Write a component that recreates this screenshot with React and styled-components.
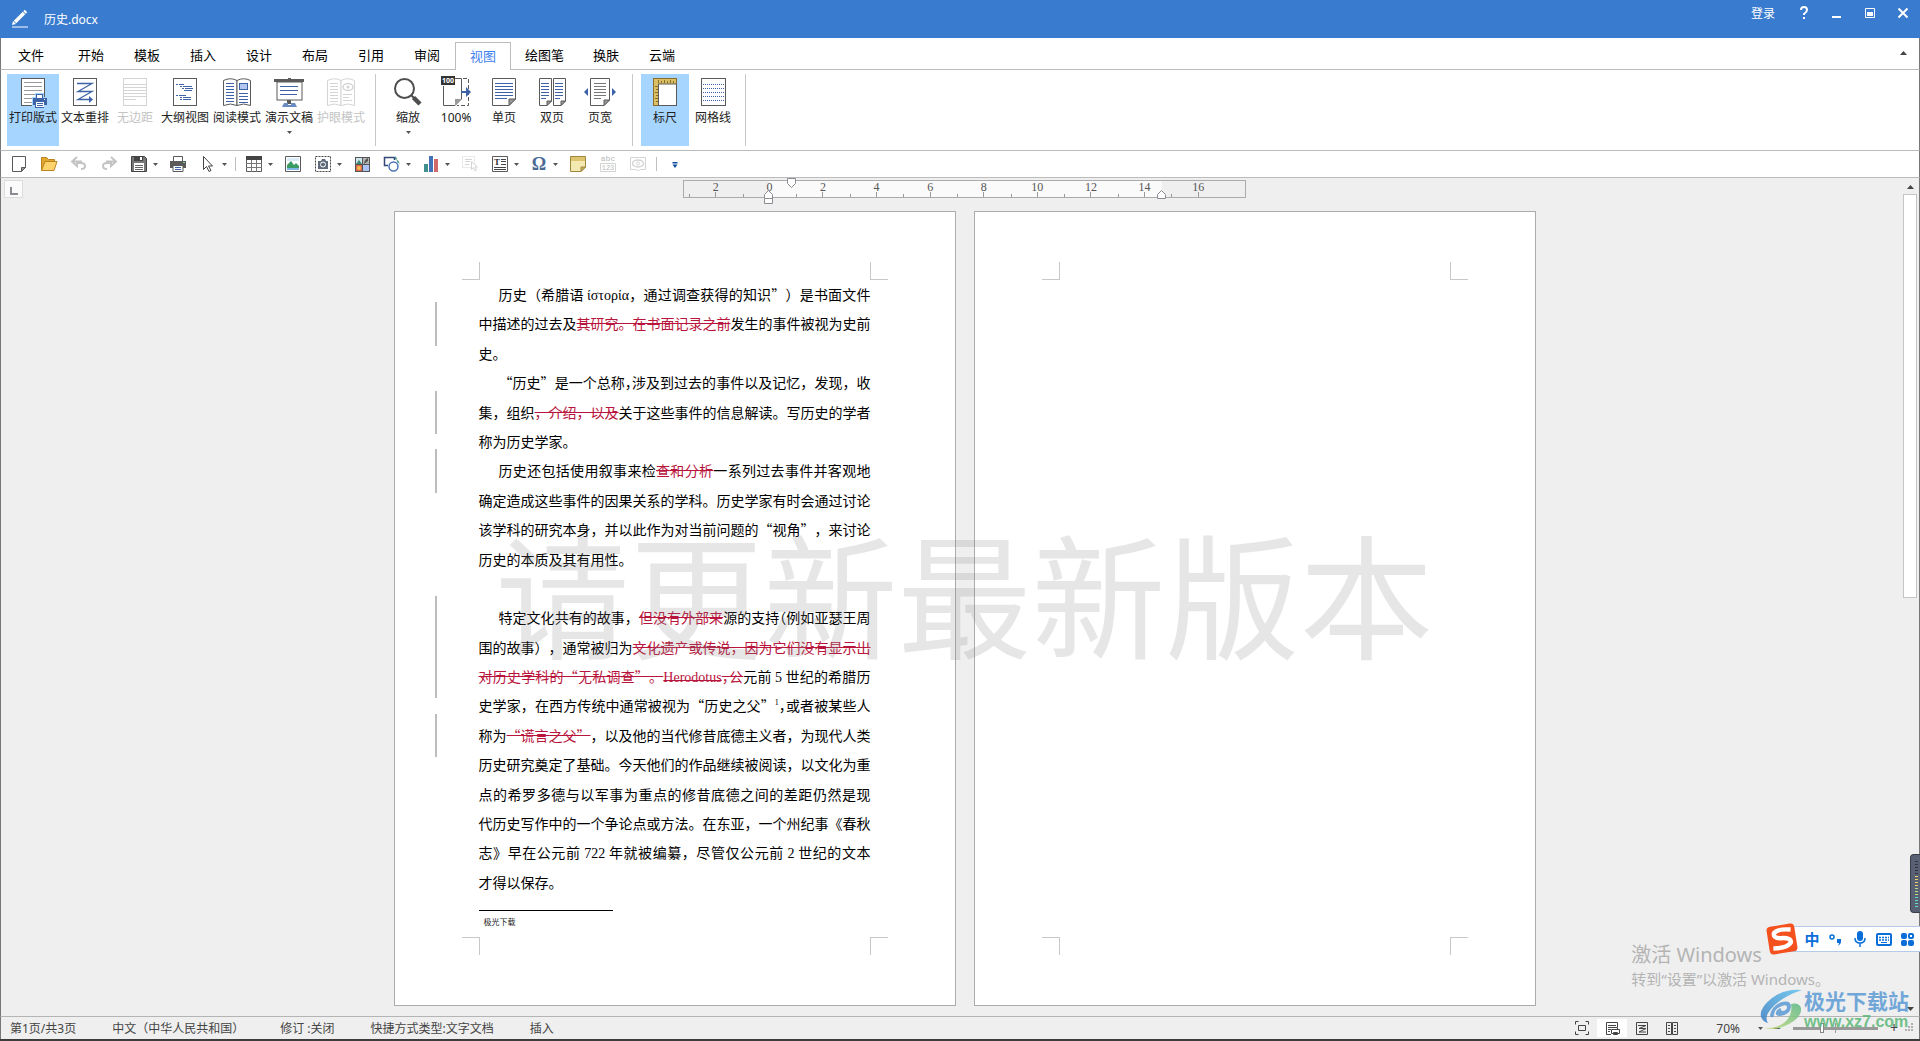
import React from 'react';
import styled, { createGlobalStyle, css } from 'styled-components';

const INK = '#5a5a5a';
const BLUE = '#3d62a8';
const PALE = '#d4d4d4';

const TABS = ['开始', '模板', '插入', '设计', '布局', '引用', '审阅', '视图', '绘图笔', '换肤', '云端'];

const RULER_MARKS = [2, 0, 2, 4, 6, 8, 10, 12, 14, 16];

/* ---------- ribbon icons ---------- */

function RibbonIcon({ children }) {
  return (
    <svg width="32" height="30" viewBox="0 0 32 30" fill="none" aria-hidden="true">
      {children}
    </svg>
  );
}

function Rows({ x, y, widths, step = 3, color = BLUE }) {
  return widths.map((w, i) => (
    <rect key={i} x={x} y={y + i * step} width={w} height="1" fill={color} />
  ));
}

function FoldedPage({ x, w, fold = 7 }) {
  const r = x + w;
  return (
    <>
      <path
        d={`M${x + 0.5} .5H${r - 0.5}V${28 - fold}L${r - fold} 27.5H${x + 0.5}Z`}
        fill="#fff"
        stroke={INK}
      />
      <path d={`M${r - fold} 27.5V${28 - fold}H${r - 0.5}Z`} fill="#999" stroke={INK} />
    </>
  );
}

const PrintLayoutIcon = () => (
  <RibbonIcon>
    <rect x="4.5" y=".5" width="23" height="27" fill="#fff" stroke={INK} />
    <Rows x={7} y={4} step={4} widths={[18, 18, 18, 16, 8, 8]} color="#9a9a9a" />
    <path d="M15 19h3v-4h9v4h4v10h-4v1h-9v-1h-3z" fill="#a6d6ff" />
    <path d="M19 16h7v4h4v7h-3v3h-9v-3h-2v-7h3z" fill={BLUE} />
    <path d="M20 17h5v3h-5zM19 24h8v5h-8z" fill="#fff" />
    <path d="M20 25.5h6M20 27.5h6" stroke={BLUE} />
    <rect x="27" y="21" width="1" height="1" fill="#fff" />
  </RibbonIcon>
);

const ReflowIcon = () => (
  <RibbonIcon>
    <rect x="4.5" y=".5" width="23" height="27" fill="#fff" stroke={INK} />
    <path d="M8 5.5h15L9 13.5h14L9 21.5h11" stroke={BLUE} strokeWidth="1.3" />
    <path d="M20 18l4 3.5-4 3.5z" fill={BLUE} />
  </RibbonIcon>
);

const NoMarginIcon = () => (
  <RibbonIcon>
    <rect x="4.5" y=".5" width="23" height="27" fill="#fff" stroke={PALE} />
    <Rows x={5} y={6} step={3} widths={[22, 22, 22, 22, 22, 12]} color={PALE} />
  </RibbonIcon>
);

const OutlineIcon = () => (
  <RibbonIcon>
    <rect x="4.5" y=".5" width="23" height="27" fill="#fff" stroke={INK} />
    <g stroke={BLUE}>
      <path d="M7 6.5h2M10 6.5h5M11 8.5h2M14 8.5h9M13 10.5h2M16 10.5h8M15 12.5h8" />
      <path d="M7 17.5h2M10 17.5h7M11 19.5h2M14 19.5h8M11 21.5h2M14 21.5h8" />
    </g>
  </RibbonIcon>
);

const BookShape = ({ color }) => (
  <>
    <path d="M2.500 2.500q7-3.500 13.500 0v25q-6.500-3-13.500 0z" fill="#fff" stroke={color} />
    <path d="M16 2.500q6.500-3.500 13.500 0v25q-7-3-13.500 0z" fill="#fff" stroke={color} />
  </>
);

const ReadingIcon = () => (
  <RibbonIcon>
    <BookShape color={INK} />
    <Rows x={5} y={5} step={3} widths={[8, 8, 8, 8, 8, 8, 8]} />
    <rect x="18.5" y="5.500" width="8" height="6" fill="#b4c7f0" stroke={BLUE} />
    <Rows x={18} y={15} step={3} widths={[9, 9, 9, 9]} />
  </RibbonIcon>
);

const SlidesIcon = () => (
  <RibbonIcon>
    <rect x="15" y="0" width="3" height="2" fill={INK} />
    <rect x="1" y="1" width="30" height="3" fill={INK} />
    <rect x="4" y="4" width="25" height="18" fill="#fff" stroke={INK} />
    <Rows x={7} y={8} step={4} widths={[18, 18, 17]} />
    <rect x="14" y="22" width="4" height="4" fill={INK} />
    <path d="M11 25h4v2h3v-2h4l2 4H9z" fill="#6b8cc0" />
  </RibbonIcon>
);

const EyeCareIcon = () => (
  <RibbonIcon>
    <BookShape color={PALE} />
    <Rows x={5} y={5} step={3} widths={[8, 8, 8, 8, 8, 8, 8]} color={PALE} />
    <ellipse cx="23" cy="9" rx="5" ry="3.500" stroke={PALE} strokeWidth="1.500" />
    <circle cx="23" cy="9" r="1.500" fill={PALE} />
    <Rows x={18} y={16} step={3} widths={[9, 6, 9]} color={PALE} />
  </RibbonIcon>
);

const ZoomIcon = () => (
  <RibbonIcon>
    <circle cx="12.500" cy="10.500" r="9.500" fill="#fff" stroke="#4e4e4e" strokeWidth="2" />
    <path d="M19 17l3 3" stroke="#4e4e4e" strokeWidth="2" />
    <path d="M21.500 19.500l6.500 6.500" stroke="#4e4e4e" strokeWidth="4.500" />
  </RibbonIcon>
);

const FullSizeIcon = () => (
  <RibbonIcon>
    <path d="M15 .5h6.500V21L15 27.500H3.500V8" fill="#fff" stroke={INK} />
    <path d="M15 27.500V21h6z" fill="#999" />
    <path d="M23 .5h5.500V27.500H17" stroke={INK} strokeDasharray="4 2" />
    <rect x="1" y="-2" width="14" height="9" fill="#333" />
    <text x="8" y="5" fontSize="7" fontWeight="700" textAnchor="middle" fill="#fff">100</text>
    <path d="M21 13h5V9l5 5-5 5v-4h-5z" fill={BLUE} />
  </RibbonIcon>
);

const OnePageIcon = () => (
  <RibbonIcon>
    <FoldedPage x={4} w={24} />
    <Rows x={7} y={5} step={3} widths={[18, 18, 18, 18, 18, 12]} />
  </RibbonIcon>
);

const TwoPagesIcon = () => (
  <RibbonIcon>
    <FoldedPage x={3} w={13} fold={5} />
    <FoldedPage x={17} w={13} fold={5} />
    <Rows x={5} y={5} step={3} widths={[8, 8, 8, 8, 8, 5]} />
    <Rows x={19} y={5} step={3} widths={[8, 8, 8, 8, 8, 5]} />
  </RibbonIcon>
);

const PageWidthIcon = () => (
  <RibbonIcon>
    <FoldedPage x={6} w={20} fold={6} />
    <Rows x={10} y={5} step={3} widths={[12, 12, 12, 12, 12, 7]} color="#777" />
    <path d="M4 10v8l-4-4zM28 10v8l4-4z" fill={BLUE} />
  </RibbonIcon>
);

const RulerIcon = () => (
  <RibbonIcon>
    <rect x="4.500" y=".5" width="23" height="27" fill="#d9bf62" stroke="#8a6d2a" />
    <rect x="9.500" y="6" width="18" height="21.500" fill="#fff" stroke={INK} />
    <path
      d="M9.500 2v3M12.500 3v2M15.500 2v3M18.500 3v2M21.500 2v3M24.500 3v2M6 8.500h3M7 11.500h2M6 14.500h3M7 17.500h2M6 20.500h3M7 23.500h2"
      stroke="#8a6d2a"
    />
  </RibbonIcon>
);

const GridIcon = () => (
  <RibbonIcon>
    <rect x="4.500" y=".5" width="24" height="27" fill="#fff" stroke={INK} />
    <path
      d="M6 6.500h21M6 10.500h21M6 14.500h21M6 18.500h21M6 22.500h21"
      stroke={BLUE}
      strokeDasharray="1 1"
    />
  </RibbonIcon>
);

const RIBBON = [
  [
    { label: '打印版式', icon: <PrintLayoutIcon />, active: true },
    { label: '文本重排', icon: <ReflowIcon /> },
    { label: '无边距', icon: <NoMarginIcon />, disabled: true },
    { label: '大纲视图', icon: <OutlineIcon /> },
    { label: '阅读模式', icon: <ReadingIcon /> },
    { label: '演示文稿', icon: <SlidesIcon />, menu: true },
    { label: '护眼模式', icon: <EyeCareIcon />, disabled: true },
  ],
  [
    { label: '缩放', icon: <ZoomIcon />, menu: true },
    { label: '100%', icon: <FullSizeIcon /> },
    { label: '单页', icon: <OnePageIcon /> },
    { label: '双页', icon: <TwoPagesIcon /> },
    { label: '页宽', icon: <PageWidthIcon /> },
  ],
  [
    { label: '标尺', icon: <RulerIcon />, active: true },
    { label: '网格线', icon: <GridIcon /> },
  ],
];

/* ---------- quick access icons ---------- */

const QUICK = [
  {
    name: '新建',
    icon: (
      <>
        <path d="M1.500 .5h13v11l-4 4h-9z" fill="#fff" stroke={INK} />
        <path d="M10.500 15.500v-4h4z" fill="#999" stroke={INK} />
      </>
    ),
  },
  {
    name: '打开',
    icon: (
      <>
        <path d="M.5 14.500v-13h5l2 2h6v3" fill="#e0a72e" stroke="#b98420" />
        <path d="M.5 14.500l3.500-9h12l-3 9z" fill="#ffd36b" stroke="#b98420" />
      </>
    ),
  },
  {
    name: '撤销',
    icon: <path d="M6 1L1 5.500 6 10V7h4q4 0 4 3t-4 3M2 5.500h9" stroke="#c4c4c4" strokeWidth="2" />,
  },
  {
    name: '恢复',
    icon: <path d="M10 1l5 4.500L10 10V7H6q-4 0-4 3t4 3M14 5.500H5" stroke="#c4c4c4" strokeWidth="2" />,
  },
  {
    name: '保存',
    split: true,
    icon: (
      <>
        <path d="M.5 .5h13l2 2v13H.5z" fill="#777" stroke="#444" />
        <path d="M3 0h9v5H3z" fill="#444" />
        <path d="M9 1h2v3H9zM3 7h10v8H3z" fill="#fff" />
        <path d="M4 9.500h8M4 11.500h8M4 13.500h8" stroke="#666" />
      </>
    ),
  },
  {
    name: '打印',
    icon: (
      <>
        <path d="M0 5h16v7H0z" fill="#5b5b5b" />
        <path d="M3.500 5V.5h9V5" fill="#fff" stroke={INK} />
        <path d="M3 9.500h10v6H3z" fill="#fff" stroke={INK} />
        <path d="M5 11.500h6M5 13.500h6" stroke={BLUE} />
        <rect x="13" y="6" width="2" height="1" fill="#6fd08c" />
      </>
    ),
  },
  {
    name: '选择',
    split: true,
    icon: (
      <path d="M3.500 .5v13l3-3 2.500 5 2-1-2.500-4.500h4z" fill="#fff" stroke="#444" />
    ),
  },
  { divider: true },
  {
    name: '表格',
    split: true,
    icon: (
      <>
        <path d="M.5 .5h15v15H.5z" fill="#fff" stroke={INK} />
        <path d="M0 0h16v4H0z" fill="#444" />
        <path d="M0 7.500h16M0 11.500h16M5.500 4v12M10.500 4v12" stroke="#777" />
      </>
    ),
  },
  {
    name: '图片',
    icon: (
      <>
        <path d="M.5 .5h15v15H.5z" fill="#fff" stroke={INK} />
        <path d="M2 2h12v3H2z" fill="#d9ecf8" />
        <path d="M2 12V9l4-4 3 4 2-2 3 3v2z" fill="#3c9a63" />
        <path d="M2 12h12v2H2z" fill="#7fb8e6" />
      </>
    ),
  },
  {
    name: '截屏',
    split: true,
    icon: (
      <>
        <path d="M.5 .5h15v15H.5z" stroke="#444" strokeDasharray="2 1" />
        <path d="M3 5h3l1-2h3l1 2h2v8H3z" fill="#5f6b7a" />
        <circle cx="8" cy="8.500" r="2.500" stroke="#fff" />
      </>
    ),
  },
  {
    name: '图库',
    icon: (
      <>
        <path d="M1 1h15v15H1z" fill="#555" />
        <path d="M2 2h6v6H2z" fill="#cfe6ee" />
        <path d="M2 8l3-4 3 4z" fill="#3c8a73" />
        <path d="M9 2h6v6H9z" fill="#b5b5b5" />
        <path d="M10 8q0-4 4-6v3z" fill="#555" />
        <path d="M2 9h6v6H2z" fill="#e0684e" />
        <circle cx="5" cy="12" r="2" fill="#f7c04a" />
        <path d="M9 9h6v6H9z" fill="#a9c4f5" />
      </>
    ),
  },
  {
    name: '形状',
    split: true,
    icon: (
      <>
        <path d="M4 9.500H.5v-8h10V4" stroke="#33477a" strokeWidth="1.500" />
        <path d="M11 1l4.500 7" stroke="#4c9488" strokeWidth="1.500" strokeDasharray="3 1" />
        <circle cx="9.500" cy="10.500" r="4.500" fill="#fff" stroke="#4c76b8" strokeWidth="1.500" />
      </>
    ),
  },
  {
    name: '图表',
    split: true,
    icon: (
      <>
        <path d="M1 8h4v8H1z" fill="#3f8f8f" />
        <path d="M6 0h4v16H6z" fill="#4472b8" />
        <path d="M11 3h4v13h-4z" fill="#d06a6a" />
      </>
    ),
  },
  {
    name: '选择对象',
    icon: (
      <>
        <path d="M.5 .5h12v11H.5z" stroke={PALE} strokeDasharray="1 1" />
        <path d="M3 3.500h7M3 5.500h5M3 8.500h4" stroke={PALE} />
        <path d="M9.500 5.500v8l2-2 1.500 3.500 1.500-1-1.500-3h2.500z" fill="#fff" stroke={PALE} />
      </>
    ),
  },
  {
    name: '文本框',
    split: true,
    icon: (
      <>
        <path d="M.5 .5h15v15H.5z" fill="#fff" stroke={INK} />
        <text x="2" y="9" fontSize="9" fontWeight="700" fontFamily="Liberation Serif, serif" fill="#333">T</text>
        <path d="M9 3.500h5M9 5.500h5M9 8.500h5M2 11.500h12M2 13.500h12" stroke="#444" />
      </>
    ),
  },
  {
    name: '符号',
    split: true,
    icon: (
      <text x="8" y="14" fontSize="18" fontWeight="700" fontFamily="Liberation Serif, serif" textAnchor="middle" fill="#4b6a96">Ω</text>
    ),
  },
  {
    name: '批注',
    icon: (
      <>
        <path d="M.5 .5h15V11L11 15.500H.5z" fill="#f4e9b0" stroke="#9c8640" />
        <path d="M1 1h14v4H1z" fill="#dfc46f" />
        <path d="M11 15.500V11h4.500z" fill="#cdb25e" stroke="#9c8640" />
      </>
    ),
  },
  {
    name: '字数统计',
    icon: (
      <>
        <text x="8" y="5" fontSize="8" fontFamily="Liberation Mono, monospace" textAnchor="middle" fill="#b8b8b8">abc</text>
        <path d="M.5 7.500h15v8H.5z" stroke={PALE} />
        <text x="8" y="14" fontSize="7" fontFamily="Liberation Mono, monospace" textAnchor="middle" fill="#b8b8b8">123</text>
      </>
    ),
  },
  {
    name: '护眼',
    icon: (
      <>
        <path d="M.5 1.500h15v12h-5l-2 1h-1l-2-1h-5z" stroke={PALE} />
        <ellipse cx="8" cy="7.500" rx="5.500" ry="3.500" stroke={PALE} strokeWidth="1.500" />
        <circle cx="8" cy="7.500" r="1.500" stroke={PALE} />
      </>
    ),
  },
  { divider: true },
  {
    name: '更多',
    icon: <path d="M5.500 6h5v1.500h-5zM5.500 8.500h5L8 12z" fill="#0b4a9e" />,
  },
];

const VIEWS = [
  {
    name: '全屏',
    icon: (
      <>
        <path d="M1.500 4.500v-3h3M11.500 1.500h3v3M14.500 11.500v3h-3M4.500 14.500h-3v-3" />
        <path d="M4.500 5.500h7v5h-7z" />
      </>
    ),
  },
  {
    name: '打印版式视图',
    active: true,
    icon: (
      <>
        <path d="M7 14.500H2.500v-12h11V7M4 5.500h8M4 7.500h6M4 9.500h3M4 11.500h2" />
        <path d="M7.500 9.500h8v4h-8zM9.500 7.500h4v2M9.500 12.500h4v2h-4z" />
      </>
    ),
  },
  {
    name: '重排视图',
    icon: (
      <>
        <path d="M2.500 2.500h11v12h-11z" />
        <path d="M4 5.500h8L5 8.500h7l-7 3.500h7" />
      </>
    ),
  },
  {
    name: '阅读视图',
    icon: (
      <path d="M2.500 2.500h5v12h-5zM8.500 2.500h5v12h-5zM4 5.500h2M4 8.500h2M4 11.500h2M10 5.500h2M10 8.500h2M10 11.500h2" />
    ),
  },
];

/* ---------- document ---------- */

function Document() {
  return (
    <>
      <Paragraph>
        <Line indent>历史（希腊语 <Latin>ίστορία</Latin>，通过调查获得的知识”）是书面文件</Line>
        <Line changed>中描述的过去及<Del>其研究。在书面记录之前</Del>发生的事件被视为史前</Line>
        <Line end>史。</Line>
      </Paragraph>
      <Paragraph>
        <Line indent>“历史”是一个总称<Half>，</Half>涉及到过去的事件以及记忆，发现，收</Line>
        <Line changed>集，组织<Del>，介绍，以及</Del>关于这些事件的信息解读。写历史的学者</Line>
        <Line end>称为历史学家。</Line>
      </Paragraph>
      <Paragraph>
        <Line indent changed>历史还包括使用叙事来检<Del>查和分析</Del>一系列过去事件并客观地</Line>
        <Line>确定造成这些事件的因果关系的学科。历史学家有时会通过讨论</Line>
        <Line>该学科的研究本身，并以此作为对当前问题的“视角”，来讨论</Line>
        <Line end>历史的本质及其有用性。</Line>
      </Paragraph>
      <Paragraph>
        <br />
      </Paragraph>
      <Paragraph>
        <Line indent changed>特定文化共有的故事，<Del>但没有外部来</Del>源的支持<Half>（</Half>例如亚瑟王周</Line>
        <Line changed>围的故事），通常被归为<Del>文化遗产或传说，因为它们没有显示出</Del></Line>
        <Line changed><Del>对历史学科的“无私调查”。<Latin>Herodotus</Latin><Half>，</Half>公</Del>元前 <Latin>5</Latin> 世纪的希腊历</Line>
        <Line>史学家，在西方传统中通常被视为“历史之父”<Note>1</Note><Half>，</Half>或者被某些人</Line>
        <Line changed>称为<Del>“谎言之父”</Del>，以及他的当代修昔底德主义者，为现代人类</Line>
        <Line>历史研究奠定了基础。今天他们的作品继续被阅读，以文化为重</Line>
        <Line>点的希罗多德与以军事为重点的修昔底德之间的差距仍然是现</Line>
        <Line>代历史写作中的一个争论点或方法。在东亚，一个州纪事《春秋</Line>
        <Line>志》早在公元前 <Latin>722</Latin> 年就被编纂，尽管仅公元前 <Latin>2</Latin> 世纪的文本</Line>
        <Line end>才得以保存。</Line>
      </Paragraph>
      <Footnote>极光下载</Footnote>
    </>
  );
}

function Sheet({ children }) {
  return (
    <StyledSheet>
      <CropMark edge="top" side="left" />
      <CropMark edge="top" side="right" />
      <CropMark edge="bottom" side="left" />
      <CropMark edge="bottom" side="right" />
      {children}
    </StyledSheet>
  );
}

function Ruler() {
  return (
    <StyledRuler>
      <RulerRange />
      {RULER_MARKS.map((n, i) => (
        <RulerCell key={i}>{n}</RulerCell>
      ))}
      <Marker at={19} top>
        <path d="M1.500 .5h8v5l-4 4-4-4z" />
      </Marker>
      <Marker at={15}>
        <path d="M1.500 8.500v-4l4-4 4 4v9h-8v-5h8" />
      </Marker>
      <Marker at={85}>
        <path d="M1.500 8.500v-4l4-4 4 4v4z" />
      </Marker>
    </StyledRuler>
  );
}

function Caret() {
  return (
    <svg width="5" height="3" viewBox="0 0 5 3" aria-hidden="true">
      <path d="M0 0h5L2.500 3z" fill="#555" />
    </svg>
  );
}

function ScrollArrow({ down }) {
  return (
    <svg width="7" height="4" viewBox="0 0 7 4" aria-hidden="true">
      <path d={down ? 'M0 0h7L3.500 4z' : 'M0 4h7L3.500 0z'} fill="#444" />
    </svg>
  );
}

function ImeBar() {
  return (
    <StyledIme>
      <svg width="32" height="32" viewBox="0 0 32 32" aria-hidden="true">
        <g transform="rotate(-9 16 16)">
          <rect x="2" y="2" width="28" height="28" rx="4" fill="#f4511e" />
          <path d="M26 8Q13 5 9 9q-2 5 6 6 11 1 9 6-4 5-18 3" stroke="#fff" strokeWidth="4.500" fill="none" />
        </g>
      </svg>
      <ImeButton aria-label="中文输入">中</ImeButton>
      <ImeButton aria-label="标点">
        <svg width="16" height="16" viewBox="0 0 16 16" aria-hidden="true">
          <circle cx="4" cy="6" r="2" fill="none" stroke="#0a6ed8" strokeWidth="1.500" />
          <path d="M9 8h4v3q0 2-3 4 1-2 1-3H9z" fill="#0a6ed8" />
        </svg>
      </ImeButton>
      <ImeButton aria-label="语音">
        <svg width="16" height="16" viewBox="0 0 16 16" fill="none" aria-hidden="true">
          <rect x="5" y="0" width="6" height="10" rx="3" fill="#0a6ed8" />
          <path d="M3 7q0 5 5 5t5-5M8 12v4" stroke="#0a6ed8" strokeWidth="1.500" />
        </svg>
      </ImeButton>
      <ImeButton aria-label="软键盘">
        <svg width="16" height="16" viewBox="0 0 16 16" fill="none" aria-hidden="true">
          <rect x="1" y="3" width="14" height="11" rx="1" stroke="#0a6ed8" strokeWidth="2" />
          <path d="M3 6.500h10M3 9h10" stroke="#0a6ed8" strokeWidth="1.500" strokeDasharray="2 1" />
          <path d="M5 11.500h6" stroke="#0a6ed8" />
        </svg>
      </ImeButton>
      <ImeButton aria-label="工具箱">
        <svg width="16" height="16" viewBox="0 0 16 16" fill="#0a6ed8" aria-hidden="true">
          <rect x="1" y="2" width="6" height="6" rx="2" />
          <rect x="1" y="9" width="6" height="6" rx="2" />
          <rect x="8" y="9" width="6" height="6" rx="2" />
          <rect x="9" y="3" width="4" height="4" rx="1" fill="none" stroke="#0a6ed8" strokeWidth="2" />
        </svg>
      </ImeButton>
    </StyledIme>
  );
}

function Gauge() {
  const bars = Array.from({ length: 16 }, (_, i) => i);
  const tint = i => (i < 5 ? '#30343f' : i < 9 ? '#e8cf6a' : i < 12 ? '#b4de86' : '#63dcc0');

  return (
    <StyledGauge>
      {bars.map(i => (
        <GaugeBar key={i} color={tint(i)} />
      ))}
    </StyledGauge>
  );
}

function SiteLogo() {
  return (
    <StyledSiteLogo>
      <svg width="42" height="42" viewBox="0 0 42 42" fill="none" aria-hidden="true">
        <defs>
          <linearGradient id="swirlBlue" x1="0" y1="1" x2="1" y2="0">
            <stop offset="0" stopColor="#3a7fc4" />
            <stop offset="1" stopColor="#63c3ee" />
          </linearGradient>
          <linearGradient id="swirlGreen" x1="0" y1="1" x2="1" y2="0">
            <stop offset="0" stopColor="#c9dc7c" />
            <stop offset="1" stopColor="#58b884" />
          </linearGradient>
        </defs>
        <path d="M42 1Q26 -1 12 9 -1 19 1 28q2 5 7 6-4-6 3-14Q21 8 42 1z" fill="url(#swirlBlue)" />
        <path d="M10 27q1-10 12-14 9-2 9 5-1 8-11 9-5 0-4-4 1-3 5-4-1 3 2 3 4-1 4-4 0-3-5-1-8 3-8 9-1 4-4 1z" fill="#5a9bd4" />
        <path d="M3 39q14 1 22-6 8-7 6-18 8-2 10 4 1 9-12 16-13 7-26 4z" fill="url(#swirlGreen)" />
      </svg>
      <div>
        <SiteName>极光下载站</SiteName>
        <SiteUrl>www.xz7.com</SiteUrl>
      </div>
    </StyledSiteLogo>
  );
}

export default function App() {
  return (
    <Window>
      <GlobalStyle />

      <TitleBar>
        <TitleName>
          <svg width="18" height="18" viewBox="0 0 18 18" fill="none" aria-hidden="true">
            <path d="M1 17h16" stroke="#fff" />
            <path d="M4 12L13 3M13.500 2.500l1.500-1.500" stroke="#fff" strokeWidth="3.500" />
            <path d="M1 15l1-4 3 3z" fill="#fff" />
          </svg>
          历史.docx
        </TitleName>
        <TitleActions>
          <TitleButton wide>登录</TitleButton>
          <TitleButton aria-label="帮助">
            <svg width="12" height="14" viewBox="0 0 12 14" fill="none" aria-hidden="true">
              <path d="M3 4q0-3 3-3t3 3q0 2-3 4v1M6 11v2" stroke="#fff" strokeWidth="2" />
            </svg>
          </TitleButton>
          <TitleButton aria-label="最小化">
            <svg width="10" height="10" viewBox="0 0 10 10" aria-hidden="true">
              <path d="M0 8h9v2H0z" fill="#fff" />
            </svg>
          </TitleButton>
          <TitleButton aria-label="还原">
            <svg width="10" height="10" viewBox="0 0 10 10" aria-hidden="true">
              <path d="M.5 .5h9v9h-9z" fill="none" stroke="#fff" />
              <path d="M2 4h6v4H2z" fill="#fff" />
            </svg>
          </TitleButton>
          <TitleButton aria-label="关闭">
            <svg width="10" height="10" viewBox="0 0 10 10" aria-hidden="true">
              <path d="M.5 .5l9 9M9.500 .5l-9 9" stroke="#fff" strokeWidth="2" />
            </svg>
          </TitleButton>
        </TitleActions>
      </TitleBar>

      <Tabs>
        <FileTab>文件</FileTab>
        {TABS.map(tab => (
          <Tab key={tab} active={tab === '视图'}>{tab}</Tab>
        ))}
        <CollapseButton aria-label="收起功能区"><ScrollArrow /></CollapseButton>
      </Tabs>

      <Ribbon>
        {RIBBON.map((group, i) => (
          <RibbonGroup key={i}>
            {group.map(({ label, icon, active, disabled, menu }) => (
              <RibbonButton key={label} active={active} disabled={disabled}>
                {icon}
                <span>{label}</span>
                {menu && <Caret />}
              </RibbonButton>
            ))}
          </RibbonGroup>
        ))}
      </Ribbon>

      <QuickBar>
        {QUICK.map(({ name, icon, split, divider }, i) => (
          divider ? <Divider key={i} /> : (
            <QuickButton key={i} aria-label={name}>
              <svg width="16" height="16" viewBox="0 0 16 16" fill="none" aria-hidden="true">{icon}</svg>
              {split && <Caret />}
            </QuickButton>
          )
        ))}
      </QuickBar>

      <Workspace>
        <CornerColumn>
          <TabStop aria-label="制表位" />
        </CornerColumn>
        <Canvas>
          <Ruler />
          <Sheets>
            <Sheet><Document /></Sheet>
            <Sheet />
            <Watermark>请更新最新版本</Watermark>
          </Sheets>
        </Canvas>
        <ScrollColumn>
          <ScrollButton aria-label="向上滚动"><ScrollArrow /></ScrollButton>
          <ScrollTrack><ScrollThumb /></ScrollTrack>
          <ScrollButton aria-label="向下滚动"><ScrollArrow down /></ScrollButton>
        </ScrollColumn>
      </Workspace>

      <StatusBar>
        <StatusText>第1页/共3页</StatusText>
        <StatusText>中文（中华人民共和国）</StatusText>
        <StatusText>修订 :关闭</StatusText>
        <StatusText>快捷方式类型:文字文档</StatusText>
        <StatusText>插入</StatusText>
        <StatusTools>
          {VIEWS.map(({ name, icon, active }) => (
            <ViewButton key={name} aria-label={name} active={active}>
              <svg width="16" height="16" viewBox="0 0 16 16" fill="none" stroke="#444" aria-hidden="true">{icon}</svg>
            </ViewButton>
          ))}
          <ZoomValue>70% <Caret /></ZoomValue>
          <StepButton aria-label="缩小">−</StepButton>
          <ZoomSlider type="range" min="10" max="190" defaultValue="70" aria-label="缩放比例" />
          <StepButton aria-label="放大">+</StepButton>
          <Grip viewBox="0 0 10 10" aria-hidden="true">
            <path d="M6 0h2v2H6zM3 3h2v2H3zM6 3h2v2H6zM0 6h2v2H0zM3 6h2v2H3zM6 6h2v2H6z" />
          </Grip>
        </StatusTools>
      </StatusBar>

      <Activation>
        <ActivationTitle>激活 Windows</ActivationTitle>
        <div>转到“设置”以激活 Windows。</div>
      </Activation>
      <ImeBar />
      <Gauge />
      <SiteLogo />
    </Window>
  );
}

/* ---------- styles ---------- */

const GlobalStyle = createGlobalStyle`
  * {
    box-sizing: border-box;
  }

  body {
    margin: 0;
    font-family: "Noto Sans", "Noto Sans CJK SC", sans-serif;
    font-size: 12px;
    color: #222;
  }

  button {
    display: flex;
    align-items: center;
    justify-content: center;
    padding: 0;
    border: 0;
    background: none;
    font: inherit;
    color: inherit;
    white-space: nowrap;
  }

  svg {
    flex: none;
    overflow: visible;
  }
`;

const Window = styled.div`
  position: relative;
  display: flex;
  flex-direction: column;
  min-height: 100vh;
  background: #efefef;
  border-bottom: 2px solid #3c3c3c;
  overflow: hidden;
`;

const sideEdges = css`
  border-left: 1px solid #777;
  border-right: 1px solid #777;
`;

const TitleBar = styled.header`
  display: flex;
  justify-content: space-between;
  height: 38px;
  background: #397bce;
  color: #fff;
`;

const TitleName = styled.div`
  display: flex;
  align-items: center;
  gap: 15px;
  padding-left: 11px;
`;

const TitleActions = styled.div`
  display: flex;
  height: 26px;
  padding-right: 1px;
`;

const TitleButton = styled.button.withConfig({ shouldForwardProp: p => p !== 'wide' })`
  width: ${p => (p.wide ? 48 : 33)}px;
`;

const Tabs = styled.nav`
  ${sideEdges}
  display: flex;
  align-items: flex-end;
  height: 32px;
  padding-right: 12px;
  background: #fff;
  border-bottom: 1px solid #bcbcbc;
  font-size: 13px;
  color: #000;
`;

const Tab = styled.button.withConfig({ shouldForwardProp: p => p !== 'active' })`
  min-width: 56px;
  height: 28px;
  padding: 0 14px 2px;

  ${p => p.active && css`
    margin-bottom: -1px;
    border: 1px solid #bcbcbc;
    border-bottom: 0;
    background: #fff;
    color: #3f7ff0;
  `}
`;

const FileTab = styled(Tab)`
  padding: 0 17px 2px;
  margin-right: 2px;
`;

const CollapseButton = styled.button`
  height: 32px;
  margin-left: auto;
`;

const Ribbon = styled.div`
  ${sideEdges}
  display: flex;
  padding: 4px 0;
  background: #fff;
  border-bottom: 1px solid #bcbcbc;
`;

const RibbonGroup = styled.div`
  display: flex;
  padding: 0 8px;
  border-right: 1px solid #c8c8c8;

  &:first-child {
    padding-left: 6px;
  }
`;

const RibbonButton = styled.button.withConfig({ shouldForwardProp: p => p !== 'active' })`
  flex-direction: column;
  justify-content: flex-start;
  min-width: 48px;
  height: 72px;
  padding: 4px 2px 0;
  line-height: 16px;
  background: ${p => (p.active ? '#a6d6ff' : 'none')};

  &:disabled {
    color: #c4c4c4;
  }

  span {
    margin: 2px 0 5px;
  }
`;

const QuickBar = styled.div`
  ${sideEdges}
  display: flex;
  align-items: center;
  height: 27px;
  padding-left: 3px;
  background: #fff;
  border-bottom: 1px solid #bcbcbc;
`;

const QuickButton = styled.button`
  gap: 6px;
  height: 24px;
  padding: 0 5px 0 7px;

  svg:only-child {
    margin-right: 2px;
  }
`;

const Divider = styled.div`
  width: 1px;
  height: 14px;
  margin: 0 3px;
  background: #c0c0c0;
`;

const Workspace = styled.main`
  ${sideEdges}
  display: flex;
  flex: 1;
  padding-top: 2px;
`;

const CornerColumn = styled.div`
  width: 28px;
  padding-left: 3px;
`;

const TabStop = styled.button`
  width: 19px;
  height: 18px;
  border: 1px solid #dcdcdc;
  background: #fbfbfb;

  &::after {
    content: '';
    width: 6px;
    height: 6px;
    margin-top: 3px;
    border: solid #8a8a90;
    border-width: 0 0 2px 2px;
  }
`;

const Canvas = styled.div`
  display: flex;
  flex: 1;
  flex-direction: column;
  align-items: center;
  gap: 13px;
  padding-bottom: 9px;
`;

const StyledRuler = styled.div`
  position: relative;
  display: flex;
  width: 563px;
  height: 18px;
  padding: 0 20px 0 5px;
  border: 1px solid #ababab;
`;

const RulerRange = styled.div`
  position: absolute;
  inset: 0 83px 0 85px;
  background: #fafafa;
`;

const RulerCell = styled.div`
  position: relative;
  flex: 1;
  font: 12px/13px "Liberation Serif", serif;
  text-align: center;
  color: #555;
  background:
    linear-gradient(#999, #999) 50% 100% / 1px 5px no-repeat,
    linear-gradient(#999, #999) 0 100% / 1px 3px no-repeat;
`;

const Marker = styled.svg.attrs({ width: 11, height: 14, viewBox: '0 0 11 14', 'aria-hidden': true }).withConfig({
  shouldForwardProp: p => p !== 'at' && p !== 'top',
})`
  position: absolute;
  left: ${p => p.at}%;
  top: ${p => (p.top ? -3 : 9)}px;
  margin-left: -5px;
  fill: #fff;
  stroke: #8c8c94;
`;

const Sheets = styled.div`
  position: relative;
  display: flex;
  justify-content: center;
  gap: 18px;
  width: 100%;
`;

const StyledSheet = styled.article`
  position: relative;
  flex: 0 1 562px;
  min-width: 0;
  aspect-ratio: 210 / 297;
  padding: 68px 84px;
  border: 1px solid #ababab;
  background: #fff;
`;

const CropMark = styled.i.withConfig({ shouldForwardProp: p => p !== 'edge' && p !== 'side' })`
  position: absolute;
  ${p => p.edge}: 50px;
  ${p => p.side}: 67px;
  width: 18px;
  height: 18px;
  border: 0 solid #c8c8c8;
  border-${p => (p.side === 'left' ? 'right' : 'left')}-width: 1px;
  border-${p => (p.edge === 'top' ? 'bottom' : 'top')}-width: 1px;
`;

const Paragraph = styled.p`
  margin: 0;
  font-family: "Noto Sans CJK SC", sans-serif;
  font-size: 14px;
  line-height: 2.1;
  color: #000;
  text-spacing-trim: space-all;
`;

const Line = styled.span.withConfig({ shouldForwardProp: p => !['indent', 'changed', 'end'].includes(p) })`
  position: relative;
  display: block;
  padding-left: ${p => (p.indent ? 20 : 0)}px;
  white-space: nowrap;
  text-align-last: ${p => (p.end ? 'left' : 'justify')};

  ${p => p.changed && css`
    &::before {
      content: '';
      position: absolute;
      top: -7px;
      bottom: -7px;
      left: -44px;
      width: 2px;
      background: #bdbdbd;
    }
  `}
`;

const Del = styled.del`
  color: #b8143c;
`;

const Latin = styled.span`
  font-family: "Liberation Serif", serif;
  line-height: 1;
`;

const Half = styled.span`
  font-feature-settings: "halt";
`;

const Note = styled.sup`
  font: 8px/1 "Liberation Serif", serif;
`;

const Footnote = styled.footer`
  margin-top: 13px;
  padding: 6px 0 0 5px;
  font: 8px/12px "Noto Sans CJK SC", sans-serif;
  background: linear-gradient(#000, #000) 0 0 / 134px 1px no-repeat;
`;

const Watermark = styled.div`
  position: absolute;
  inset: 0;
  display: flex;
  align-items: center;
  justify-content: center;
  padding-bottom: 34px;
  font: 134px/1 "Noto Sans CJK SC", sans-serif;
  color: rgba(128, 128, 128, 0.2);
  white-space: nowrap;
  pointer-events: none;
`;

const ScrollColumn = styled.div`
  display: flex;
  flex-direction: column;
  width: 19px;
  padding: 0 2px 0 3px;
`;

const ScrollButton = styled.button`
  height: 14px;
`;

const ScrollTrack = styled.div`
  flex: 1;
`;

const ScrollThumb = styled.div`
  height: 50%;
  border: 1px solid #c4c4c4;
  background: #fff;
`;

const StatusBar = styled.footer`
  ${sideEdges}
  display: flex;
  align-items: center;
  gap: 36px;
  height: 23px;
  padding: 0 4px 0 9px;
  border-top: 1px solid #b4b4b4;
  color: #444;
`;

const StatusText = styled.span`
  white-space: nowrap;
`;

const StatusTools = styled.div`
  display: flex;
  align-items: center;
  margin-left: auto;
`;

const ViewButton = styled.button.withConfig({ shouldForwardProp: p => p !== 'active' })`
  width: 30px;
  height: 18px;
  background: ${p => (p.active ? '#fff' : 'none')};
`;

const ZoomValue = styled.button`
  gap: 18px;
  margin: 0 8px 0 29px;
`;

const StepButton = styled.button`
  width: 12px;
  font-size: 14px;
  line-height: 16px;
`;

const ZoomSlider = styled.input`
  width: 85px;
  height: 10px;
  margin: 0 10px;
  appearance: none;
  background:
    linear-gradient(#999, #999) 50% 50% / 100% 3px no-repeat,
    linear-gradient(#999, #999) 50% 50% / 1px 100% no-repeat;

  &::-webkit-slider-thumb {
    appearance: none;
    width: 4px;
    height: 10px;
    border: 1px solid #888;
    background: #fff;
  }
`;

const Grip = styled.svg`
  width: 10px;
  height: 10px;
  margin-left: 5px;
  fill: #b0b0b0;
`;

const Activation = styled.div`
  position: absolute;
  right: 90px;
  bottom: 48px;
  font-size: 15px;
  line-height: 24px;
  color: #b4b4b4;
`;

const ActivationTitle = styled.div`
  font-size: 20px;
`;

const StyledIme = styled.div`
  position: absolute;
  right: 0;
  bottom: 87px;
  display: flex;
  align-items: center;
  height: 26px;
  border: 1px solid #b4cbea;
  border-right: 0;
  background: #fff;

  > svg {
    margin: 0 2px 0 -24px;
  }
`;

const ImeButton = styled.button`
  width: 24px;
  font-size: 15px;
  font-weight: 700;
  line-height: 24px;
  color: #0a6ed8;
`;

const StyledGauge = styled.div`
  position: absolute;
  right: 0;
  bottom: 126px;
  display: flex;
  flex-direction: column;
  justify-content: center;
  gap: 2px;
  width: 10px;
  height: 59px;
  padding: 0 2px 0 4px;
  border: 1px solid #3a3e4a;
  border-right: 0;
  border-radius: 4px 0 0 4px;
  background: #596074;
`;

const GaugeBar = styled.i`
  height: 1px;
  background: ${p => p.color};
`;

const StyledSiteLogo = styled.div`
  position: absolute;
  right: 11px;
  bottom: 8px;
  display: flex;
  gap: 2px;
  opacity: 0.85;
`;

const SiteName = styled.div`
  font-size: 21px;
  font-weight: 700;
  line-height: 24px;
  color: #5b9bd5;
`;

const SiteUrl = styled.div`
  font: 700 16px/18px "Liberation Sans", sans-serif;
  color: #5cb878;
`;
